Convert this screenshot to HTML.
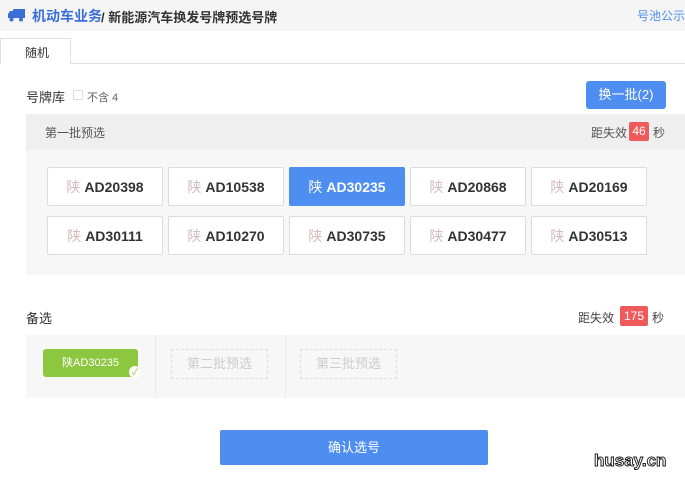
<!DOCTYPE html>
<html><head><meta charset="utf-8"><style>
*{margin:0;padding:0;box-sizing:border-box}
body{width:685px;height:481px;background:#fff;font-family:"Liberation Sans","Noto Sans CJK SC",sans-serif;position:relative;overflow:hidden;color:#333;font-size:13px}
.a{position:absolute}
.plate{position:absolute;width:116px;height:39px;border:1px solid #dcdcdc;background:#fff;border-radius:2px;font-size:14px;font-weight:bold;color:#333;display:flex;align-items:center;justify-content:center}
.plate span{font-weight:normal;color:#d4bcbc;margin-right:4px}
.plate.sel{background:#4d8ef0;color:#fff;border-color:#4d8ef0}
.plate.sel span{color:#fff}
</style></head><body>
<div class="a" style="left:0;top:0;width:685px;height:31px;background:#f5f5f5"></div>
<svg class="a" style="left:8px;top:9px" width="17" height="13" viewBox="0 0 17 13"><rect x="5" y="0" width="12" height="9" fill="#3a6fd8"/><path d="M0 5 L2 2 H5 V9 H0Z" fill="#3a6fd8"/><circle cx="3.5" cy="10.5" r="2" fill="#3a6fd8"/><circle cx="13" cy="10.5" r="2" fill="#3a6fd8"/></svg>
<div class="a" style="left:32px;top:6px;font-size:14px;font-weight:bold;color:#3a6fd8">机动车业务</div>
<div class="a" style="left:101px;top:7px;font-size:13px;font-weight:bold;color:#333">/ 新能源汽车换发号牌预选号牌</div>
<div class="a" style="left:637px;top:7px;font-size:12px;color:#4d8ef0;white-space:nowrap">号池公示</div>
<div class="a" style="left:0;top:63px;width:685px;height:1px;background:#e0e0e0"></div>
<div class="a" style="left:0;top:38px;width:71px;height:26px;background:#fff;border:1px solid #e0e0e0;border-bottom:none;font-size:12px;padding:5px 0 0 24px">随机</div>
<div class="a" style="left:26px;top:87px;font-size:13px">号牌库</div>
<div class="a" style="left:73px;top:90px;width:10px;height:10px;border:1px solid #ddd"></div>
<div class="a" style="left:87px;top:89px;font-size:11px;color:#666">不含 4</div>
<div class="a" style="left:586px;top:81px;width:80px;height:28px;background:#4d8ef0;border-radius:3px;color:#fff;font-size:13px;text-align:center;line-height:28px">换一批(2)</div>
<div class="a" style="left:26px;top:114px;width:659px;height:36px;background:#efefef"></div>
<div class="a" style="left:45px;top:124px;font-size:12px;color:#555">第一批预选</div>
<div class="a" style="left:591px;top:124px;font-size:12px;color:#555">距失效</div>
<div class="a" style="left:629px;top:122px;width:20px;height:19px;background:#ef5b5b;border-radius:2px;color:#fff;font-size:12px;text-align:center;line-height:19px">46</div>
<div class="a" style="left:653px;top:124px;font-size:12px;color:#555">秒</div>
<div class="a" style="left:26px;top:150px;width:659px;height:125px;background:#f7f7f7"></div>
<div class="plate" style="left:47px;top:167px"><span>陕</span>AD20398</div>
<div class="plate" style="left:168px;top:167px"><span>陕</span>AD10538</div>
<div class="plate sel" style="left:289px;top:167px"><span>陕</span>AD30235</div>
<div class="plate" style="left:410px;top:167px"><span>陕</span>AD20868</div>
<div class="plate" style="left:531px;top:167px"><span>陕</span>AD20169</div>
<div class="plate" style="left:47px;top:216px"><span>陕</span>AD30111</div>
<div class="plate" style="left:168px;top:216px"><span>陕</span>AD10270</div>
<div class="plate" style="left:289px;top:216px"><span>陕</span>AD30735</div>
<div class="plate" style="left:410px;top:216px"><span>陕</span>AD30477</div>
<div class="plate" style="left:531px;top:216px"><span>陕</span>AD30513</div>
<div class="a" style="left:26px;top:308px;font-size:13px">备选</div>
<div class="a" style="left:578px;top:309px;font-size:12px;color:#444">距失效</div>
<div class="a" style="left:620px;top:306px;width:28px;height:20px;background:#ef5b5b;border-radius:2px;color:#fff;font-size:12px;text-align:center;line-height:20px">175</div>
<div class="a" style="left:652px;top:309px;font-size:12px;color:#444">秒</div>
<div class="a" style="left:26px;top:335px;width:659px;height:63px;background:#f7f7f7"></div>
<div class="a" style="left:155px;top:335px;width:1px;height:63px;background:#ebebeb"></div>
<div class="a" style="left:285px;top:335px;width:1px;height:63px;background:#ebebeb"></div>
<div class="a" style="left:43px;top:349px;width:95px;height:28px;background:#8dc63f;border-radius:3px;color:#fff;font-size:11px;text-align:center;line-height:28px">陕AD30235</div>
<div class="a" style="left:129px;top:366px;width:12px;height:12px;border-radius:50%;background:#fff;color:#8dc63f;font-size:9px;text-align:center;line-height:12px">✓</div>
<div class="a" style="left:171px;top:349px;width:97px;height:30px;border:1px dashed #ddd;color:#ccc;font-size:13px;text-align:center;line-height:28px">第二批预选</div>
<div class="a" style="left:300px;top:349px;width:97px;height:30px;border:1px dashed #ddd;color:#ccc;font-size:13px;text-align:center;line-height:28px">第三批预选</div>
<div class="a" style="left:220px;top:430px;width:268px;height:35px;background:#4d8ef0;border-radius:2px;color:#fff;font-size:13px;text-align:center;line-height:35px">确认选号</div>
<div class="a" style="left:594px;top:451px;font-size:17px;font-weight:bold;color:#fff;-webkit-text-stroke:1px #222;letter-spacing:0">husay.cn</div>
</body></html>
